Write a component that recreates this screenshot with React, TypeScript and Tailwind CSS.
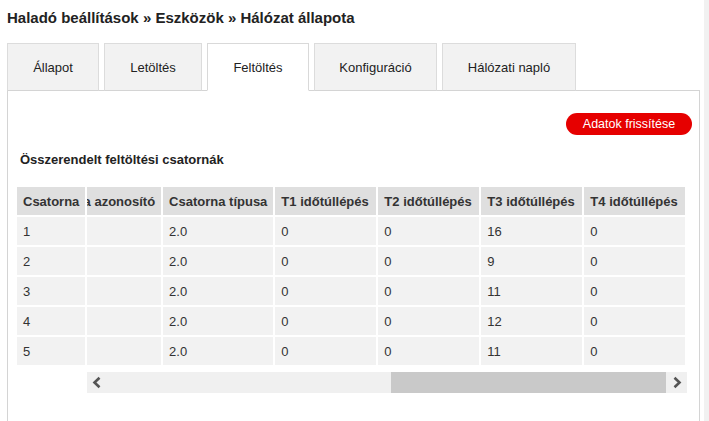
import React from 'react';

type Row = {
  id: string;
  channelId: string;
  type: string;
  t1: string;
  t2: string;
  t3: string;
  t4: string;
};

const tabs = [
  { label: 'Állapot', width: 'w-[92px]' },
  { label: 'Letöltés', width: 'w-[98px]' },
  { label: 'Feltöltés', width: 'w-[102px]' },
  { label: 'Konfiguráció', width: 'w-[123px]' },
  { label: 'Hálózati napló', width: 'w-[134px]' },
];
const activeTab = 'Feltöltés';

const rows: Row[] = [
  { id: '1', channelId: '', type: '2.0', t1: '0', t2: '0', t3: '16', t4: '0' },
  { id: '2', channelId: '', type: '2.0', t1: '0', t2: '0', t3: '9', t4: '0' },
  { id: '3', channelId: '', type: '2.0', t1: '0', t2: '0', t3: '11', t4: '0' },
  { id: '4', channelId: '', type: '2.0', t1: '0', t2: '0', t3: '12', t4: '0' },
  { id: '5', channelId: '', type: '2.0', t1: '0', t2: '0', t3: '11', t4: '0' },
];

const scrollHeaders = [
  { label: 'Csatorna azonosító', width: 'w-[132px]' },
  { label: 'Csatorna típusa', width: 'w-[110px]' },
  { label: 'T1 időtúllépés', width: 'w-[101px]' },
  { label: 'T2 időtúllépés', width: 'w-[101px]' },
  { label: 'T3 időtúllépés', width: 'w-[101px]' },
  { label: 'T4 időtúllépés', width: 'w-[101px]' },
];

const thClass = 'h-[28px] bg-[#dfdfdf] px-[6px] text-left align-middle font-bold text-[#333] whitespace-nowrap';
const tdClass = 'h-[28px] bg-[#f2f2f2] px-[6px] text-left align-middle text-[#333] whitespace-nowrap';

const Chevron: React.FC<{ dir: 'left' | 'right' }> = ({ dir }) => (
  <svg width="21" height="21" viewBox="0 0 21 21">
    <polyline
      points={dir === 'left' ? '12.5,5.8 7.5,10.5 12.5,15.2' : '8.5,5.8 13.5,10.5 8.5,15.2'}
      fill="none"
      stroke="#555"
      strokeWidth="2.6"
    />
  </svg>
);

const App: React.FC = () => {
  return (
    <div className="flex min-h-[421px] bg-white font-['Liberation_Sans',Arial,sans-serif] text-[13px] leading-[15px] text-[#222]">
      <div className="w-[704px] shrink-0">
        <h1 className="pl-[7px] pt-[9px] text-[15px] font-bold leading-[18px] text-[#222]">
          Haladó beállítások » Eszközök » Hálózat állapota
        </h1>

        <nav className="relative z-10 mt-[16px] flex gap-[5px] pl-[7px]">
          {tabs.map((tab) =>
            tab.label === activeTab ? (
              <div
                key={tab.label}
                className={`${tab.width} flex h-[48px] items-center justify-center border border-[#d9d9d9] border-b-white bg-white`}
              >
                {tab.label}
              </div>
            ) : (
              <div
                key={tab.label}
                className={`${tab.width} flex h-[48px] items-center justify-center border border-[#dcdcdc] border-b-[#d4d4d4] bg-[#f2f2f2]`}
              >
                {tab.label}
              </div>
            ),
          )}
        </nav>

        <section className="-mt-px ml-[7px] h-[332px] w-[693px] border border-[#d4d4d4] border-b-0">
          <div className="flex justify-end pr-[7px] pt-[22px]">
            <button className="h-[22px] w-[126px] rounded-full bg-[#e60000] text-[12.5px] leading-[22px] text-white">
              Adatok frissítése
            </button>
          </div>

          <h2 className="mt-[17px] pl-[12px] text-[13px] font-bold leading-[16px] text-[#222]">
            Összerendelt feltöltési csatornák
          </h2>

          <div className="mt-[17px] flex pl-[7px]">
            <table className="shrink-0 border-separate border-spacing-[2px]">
              <thead>
                <tr>
                  <th className={`${thClass} w-[68px]`}>Csatorna</th>
                </tr>
              </thead>
              <tbody>
                {rows.map((row) => (
                  <tr key={row.id}>
                    <td className={tdClass}>{row.id}</td>
                  </tr>
                ))}
              </tbody>
            </table>

            <div className="flex w-[600px] justify-end overflow-hidden">
              <table className="shrink-0 border-separate border-spacing-[2px]">
                <thead>
                  <tr>
                    {scrollHeaders.map((h) => (
                      <th key={h.label} className={`${thClass} ${h.width}`}>
                        {h.label}
                      </th>
                    ))}
                  </tr>
                </thead>
                <tbody>
                  {rows.map((row) => (
                    <tr key={row.id}>
                      <td className={tdClass}>{row.channelId}</td>
                      <td className={tdClass}>{row.type}</td>
                      <td className={tdClass}>{row.t1}</td>
                      <td className={tdClass}>{row.t2}</td>
                      <td className={tdClass}>{row.t3}</td>
                      <td className={tdClass}>{row.t4}</td>
                    </tr>
                  ))}
                </tbody>
              </table>
            </div>
          </div>

          {/* horizontal scroll bar of the table */}
          <div className="ml-[79px] mt-[5px] flex h-[21px] w-[600px] bg-[#f0f0f0]">
            <div className="h-[21px] w-[21px] shrink-0">
              <Chevron dir="left" />
            </div>
            <div className="flex flex-1">
              <div className="ml-[283px] h-[21px] w-[275px] bg-[#c9c9c9]" />
            </div>
            <div className="h-[21px] w-[21px] shrink-0">
              <Chevron dir="right" />
            </div>
          </div>
        </section>
      </div>
      <div className="flex-1 bg-[#f1f1f1]" />
    </div>
  );
};

export default App;
